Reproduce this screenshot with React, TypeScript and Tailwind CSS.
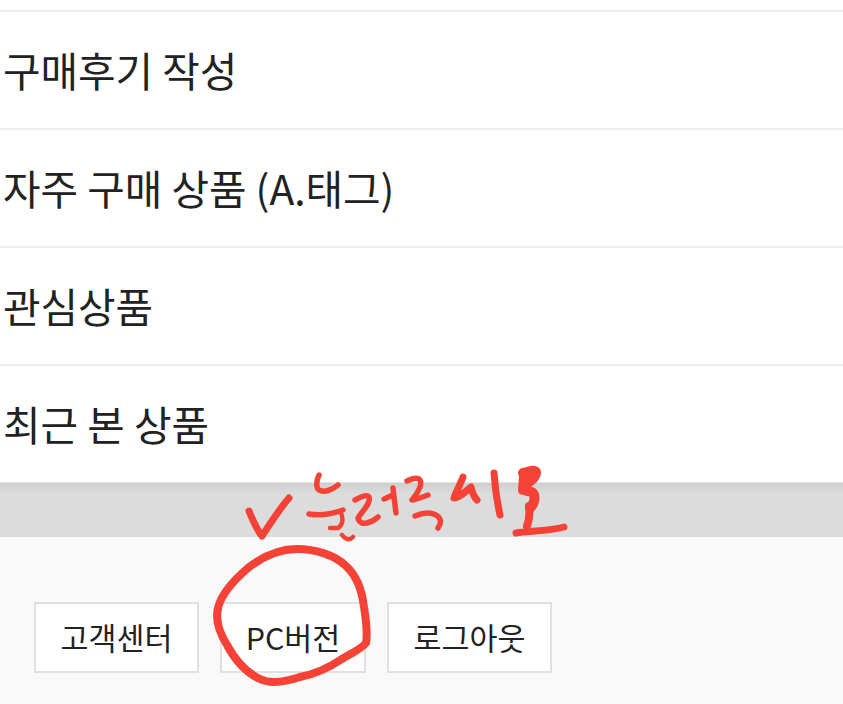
const rows = ['구매후기 작성', '자주 구매 상품 (A.태그)', '관심상품', '최근 본 상품'];
const buttons = ['고객센터', 'PC버전', '로그아웃'];

const font = "font-['Noto_Sans_CJK_KR','Noto_Sans',sans-serif]";

const Scribble = () => (
  <svg className="absolute left-0 top-0 pointer-events-none" width="843" height="704" fill="none" stroke="#f44336" strokeLinecap="round" strokeLinejoin="round">
    <path strokeWidth="7" d="M249 511 C253 521 258 531 262 536 C270 524 280 508 289 498" />
    <path strokeWidth="8" d="M300 677 C285 682 270 684 260 679 C245 672 235 660 227 645 C219 632 215 620 218 608 C221 595 234 580 248 568 C262 557 280 549 297 549 C315 549 335 555 346 566 C357 576 362 590 364 607 C366 620 368 632 366 643 C360 650 350 654 342 659 C330 667 315 674 300 677 Z" />
    <path strokeWidth="5.5" d="M319 475 C316 481 316 488 319 490 C324 493 332 490 338 485" />
    <path strokeWidth="5.5" d="M309 514 C320 516 332 514 343 510" />
    <path strokeWidth="4.5" d="M340 511 C344 518 343 525 338 528 L330 528 M342 535 C345 539 349 541 353 537" />
    <path strokeWidth="5.5" d="M355 500 C361 497 367 494 369 497 C371 504 362 511 358 518 C359 523 363 524 367 523 C371 522 375 520 378 517" />
    <path strokeWidth="5.5" d="M384 499 C387 498 390 496 393 495 M393 488 C394 497 395 505 396 513" />
    <path strokeWidth="5.5" d="M407 481 C411 479 416 477 419 479 C424 483 417 494 412 500 C418 499 423 497 428 495" />
    <path strokeWidth="5.5" d="M415 516 C422 513 430 512 436 515 C441 518 442 522 438 528" />
    <path strokeWidth="7" d="M463 477 C460 485 456 492 454 498 C459 498 465 492 471 487 C472 492 474 497 477 500" />
    <path strokeWidth="7" d="M494 473 C495 488 497 502 500 515" />
    <path strokeWidth="10" d="M523 473 C528 472 534 469 536 472 C536 478 529 482 524 486 M524 476 L523 490 C527 491 531 491 533 493 C536 497 534 505 530 508" />
    <path strokeWidth="8" d="M529 506 C530 514 529 521 527 526" />
    <path strokeWidth="7" d="M516 533 C530 531 550 531 564 527" />
  </svg>
);

export default function App() {
  return (
    <div className={`relative w-[843px] h-[704px] overflow-hidden bg-[#f9f9f9] ${font}`}>
      <div className="pt-[10px] bg-white border-b border-[#e4e4e4]">
        {rows.map((r) => (
          <div key={r} className="h-[118px] border-t-2 border-[#eeeeee] flex items-center pl-[3px] text-[40.8px] text-[#222222]">
            {r}
          </div>
        ))}
      </div>
      <div className="h-[54px] bg-[#dcdcdc] bg-gradient-to-b from-[#cfcfcf] to-[#dcdcdc] to-[20%]" />
      <div className="flex gap-[21px] pl-[34px] pt-[65px]">
        {buttons.map((b, i) => (
          <div key={b} className={`h-[71px] border-2 border-[#e0e0e0] bg-white flex items-center justify-center text-[30.4px] text-[#222222] ${i === 1 ? 'w-[146px]' : 'w-[165px]'}`}>
            {b}
          </div>
        ))}
      </div>
      <Scribble />
    </div>
  );
}
